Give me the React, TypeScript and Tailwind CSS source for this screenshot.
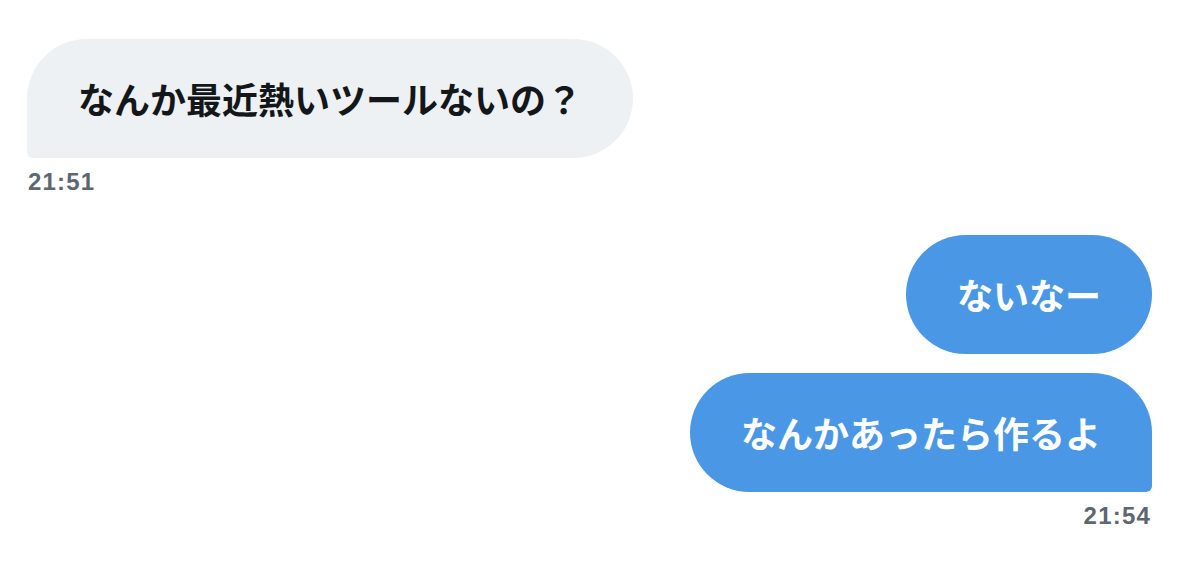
import React from "react";

type Msg = { text: string; last?: boolean };

const jp = "font-['Noto_Sans_CJK_JP',sans-serif] font-bold text-[36px] leading-[43px] py-[38px] px-[51px] whitespace-nowrap";
const stamp = "-mt-[9px] font-['Liberation_Sans',Arial,sans-serif] font-bold text-[24px] leading-[28px] tracking-[1.2px] text-[#5e6671]";

function Received({ items, time }: { items: Msg[]; time: string }) {
  return (
    <div className="flex flex-col items-start gap-[19px]">
      {items.map((m, i) => (
        <div
          key={i}
          className={`${jp} bg-[#eef1f3] text-[#14171a] rounded-[60px] ${m.last ? "rounded-bl-[6px]" : ""}`}
        >
          {m.text}
        </div>
      ))}
      <span className={`${stamp} pl-[1px]`}>{time}</span>
    </div>
  );
}

function Sent({ items, time }: { items: Msg[]; time: string }) {
  return (
    <div className="flex flex-col items-end gap-[19px]">
      {items.map((m, i) => (
        <div
          key={i}
          className={`${jp} bg-[#4a97e6] text-white rounded-[60px] ${m.last ? "rounded-br-[6px]" : ""}`}
        >
          {m.text}
        </div>
      ))}
      <span className={`${stamp} pr-[1px]`}>{time}</span>
    </div>
  );
}

export default function App() {
  return (
    <div className="h-[567px] w-[1179px] bg-white px-[27px] pt-[39px]">
      <Received items={[{ text: "なんか最近熱いツールないの？", last: true }]} time="21:51" />
      <div className="mt-[39px]">
        <Sent
          items={[{ text: "ないなー" }, { text: "なんかあったら作るよ", last: true }]}
          time="21:54"
        />
      </div>
    </div>
  );
}
